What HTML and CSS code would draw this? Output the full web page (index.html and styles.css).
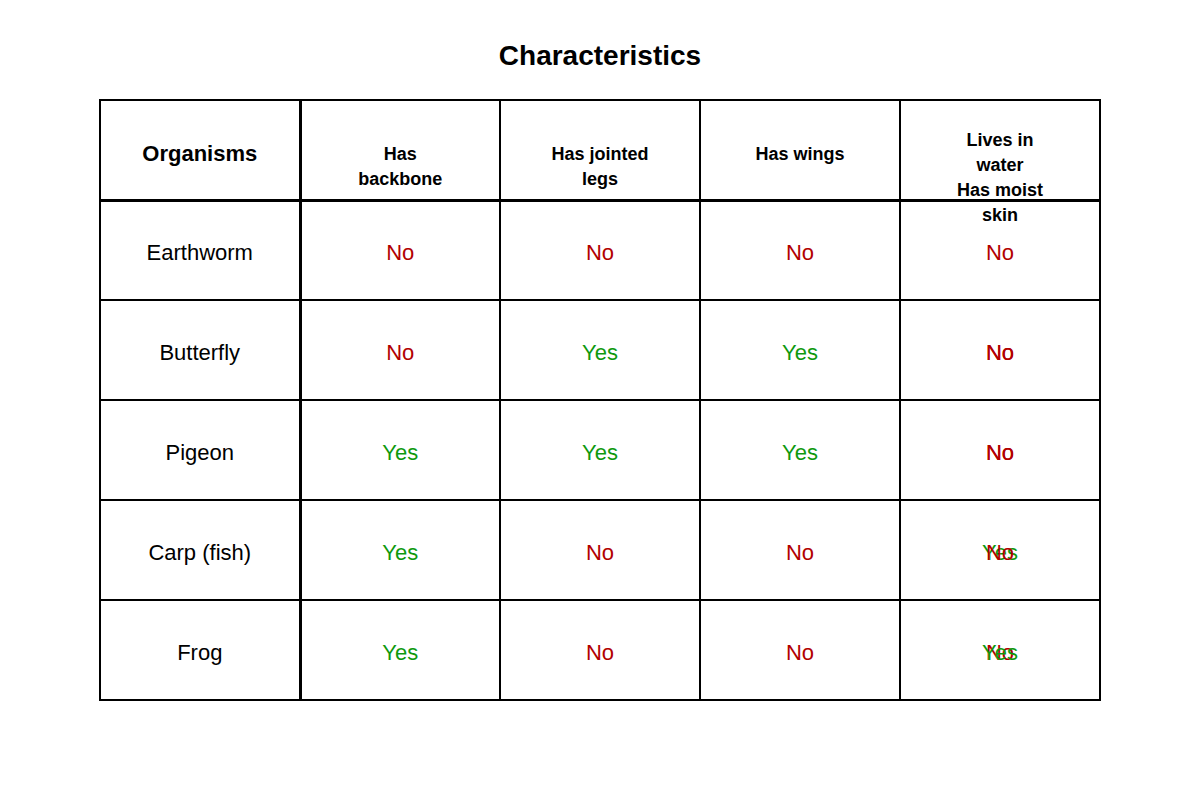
FILE: index.html
```html
<!DOCTYPE html>
<html>
<head>
<meta charset="utf-8">
<link rel="stylesheet" href="styles.css">
</head>
<body>
<h1 class="title">Characteristics</h1>
<table class="grid">
  <tr class="head-row">
    <th class="org-head"><div class="hd hd-org">Organisms</div></th>
    <th><div class="hd">Has<br>backbone</div></th>
    <th><div class="hd">Has jointed<br>legs</div></th>
    <th><div class="hd">Has wings</div></th>
    <th><div class="hd hd-tall">Lives in<br>water<br>Has moist<br>skin</div></th>
  </tr>
  <tr>
    <td class="name">Earthworm</td>
    <td><span class="no">No</span></td>
    <td><span class="no">No</span></td>
    <td><span class="no">No</span></td>
    <td><span class="no">No</span></td>
  </tr>
  <tr>
    <td class="name">Butterfly</td>
    <td><span class="no">No</span></td>
    <td><span class="yes">Yes</span></td>
    <td><span class="yes">Yes</span></td>
    <td><div class="stack"><span class="no">No</span><span class="no">No</span></div></td>
  </tr>
  <tr>
    <td class="name">Pigeon</td>
    <td><span class="yes">Yes</span></td>
    <td><span class="yes">Yes</span></td>
    <td><span class="yes">Yes</span></td>
    <td><div class="stack"><span class="no">No</span><span class="no">No</span></div></td>
  </tr>
  <tr>
    <td class="name">Carp (fish)</td>
    <td><span class="yes">Yes</span></td>
    <td><span class="no">No</span></td>
    <td><span class="no">No</span></td>
    <td><div class="stack"><span class="yes">Yes</span><span class="no">No</span></div></td>
  </tr>
  <tr>
    <td class="name">Frog</td>
    <td><span class="yes">Yes</span></td>
    <td><span class="no">No</span></td>
    <td><span class="no">No</span></td>
    <td><div class="stack"><span class="no">No</span><span class="yes">Yes</span></div></td>
  </tr>
</table>
</body>
</html>
```

FILE: styles.css
```css
html, body {
  margin: 0;
  padding: 0;
  background: #ffffff;
}
body {
  font-family: "Liberation Sans", Arial, sans-serif;
  color: #000000;
}
.title {
  margin: 0;
  padding-top: 39px;
  height: 60px;
  box-sizing: content-box;
  font-size: 28px;
  line-height: 34px;
  font-weight: bold;
  text-align: center;
}
.grid {
  margin: 0 auto;
  border-collapse: collapse;
  table-layout: fixed;
  width: 1002px;
  border: 2px solid #000;
}
.grid th, .grid td {
  width: 200px;
  height: 100px;
  padding: 0;
  border: 2px solid #000;
  text-align: center;
  vertical-align: middle;
  box-sizing: border-box;
}
.grid th {
  vertical-align: top;
  font-size: 18px;
  line-height: 25px;
  font-weight: bold;
  border-bottom: 3px solid #000;
}
.grid th:first-child, .grid td:first-child {
  border-right: 3px solid #000;
}
.hd {
  height: 96px;
  padding-top: 41px;
  box-sizing: border-box;
  overflow: visible;
}
.hd-org {
  font-size: 22px;
  padding-top: 40px;
}
.hd-tall {
  padding-top: 27px;
}
.grid td {
  font-size: 22px;
  line-height: 26px;
  padding-top: 6px;
}
.name {
  color: #000;
}
.no {
  color: #b20000;
}
.yes {
  color: #0e990e;
}
.stack {
  display: grid;
  justify-items: center;
}
.stack > span {
  grid-area: 1 / 1;
}
```
